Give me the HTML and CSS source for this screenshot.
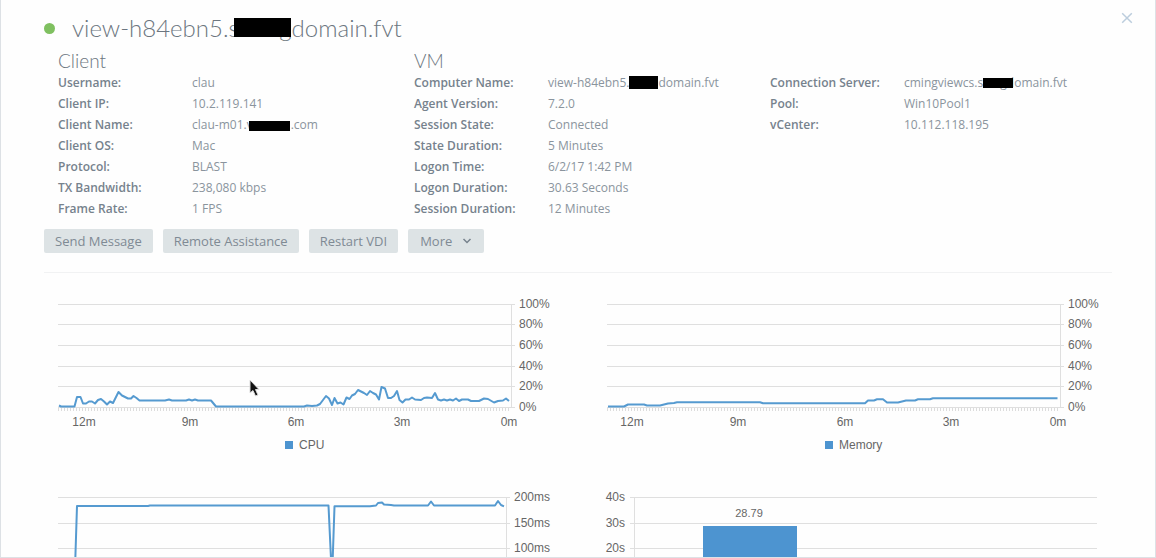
FILE: index.html
```html
<!DOCTYPE html>
<html lang="en">
<head>
<meta charset="utf-8">
<title>VDI session details</title>
<link rel="stylesheet" href="styles.css">
</head>
<body>
<main class="panel">
  <header class="header">
    <span class="status"></span>
    <h1 class="title">view-h84ebn5.<span class="redact redact-title"><span>s</span><span>g</span></span>domain.fvt</h1>
    <button class="close" type="button" aria-label="Close"><svg width="12" height="12" viewBox="0 0 12 12"><path d="M1.2 1.2 10.8 10.8M10.8 1.2 1.2 10.8"/></svg></button>
  </header>

  <div class="info">
    <section class="group">
      <h2>Client</h2>
      <dl>
        <dt>Username:</dt><dd>clau</dd>
        <dt>Client IP:</dt><dd>10.2.119.141</dd>
        <dt>Client Name:</dt><dd>clau-m01.<span class="redact redact-mail"><span>v</span></span>.com</dd>
        <dt>Client OS:</dt><dd>Mac</dd>
        <dt>Protocol:</dt><dd>BLAST</dd>
        <dt>TX Bandwidth:</dt><dd>238,080 kbps</dd>
        <dt>Frame Rate:</dt><dd>1 FPS</dd>
      </dl>
    </section>
    <section class="group">
      <h2>VM</h2>
      <dl>
        <dt>Computer Name:</dt><dd>view-h84ebn5.<span class="redact redact-host"></span>domain.fvt</dd>
        <dt>Agent Version:</dt><dd>7.2.0</dd>
        <dt>Session State:</dt><dd>Connected</dd>
        <dt>State Duration:</dt><dd>5 Minutes</dd>
        <dt>Logon Time:</dt><dd>6/2/17 1:42 PM</dd>
        <dt>Logon Duration:</dt><dd>30.63 Seconds</dd>
        <dt>Session Duration:</dt><dd>12 Minutes</dd>
      </dl>
    </section>
    <section class="group group-plain">
      <dl>
        <dt>Connection Server:</dt><dd>cmingviewcs.s<span class="redact redact-server"><span>gd</span></span>omain.fvt</dd>
        <dt>Pool:</dt><dd>Win10Pool1</dd>
        <dt>vCenter:</dt><dd>10.112.118.195</dd>
      </dl>
    </section>
  </div>

  <div class="actions">
    <button type="button">Send Message</button>
    <button type="button">Remote Assistance</button>
    <button type="button">Restart VDI</button>
    <button type="button" class="more">More <svg width="10" height="8" viewBox="0 0 10 8"><path d="M1.5 2 5 5.5 8.5 2"/></svg></button>
  </div>

  <div class="charts">
    <svg class="chart" viewBox="44 288 549 180" role="img" aria-label="CPU">
      <path class="grid" d="M58 304.5H515M58 324.5H515M58 345.5H515M58 366.5H515M58 386.5H515M58 407.5H515M511.5 304V408"/>
      <path class="ticks" d="M58 409.5H511"/>
      <polyline class="line" points="59,405.5 61,406.5 74.5,406.5 77,397 80.500,397 83,403.500 86,403.500 89,401.500 92,401.500 95,403.500 98,400 101,399 104,401.500 107,404.500 110,401.500 113,403 116,397 118.500,392 122,395.500 125,397 128,398.500 131,398.500 133.500,396 136.500,398 139.500,400.500 165,400.500 169,399.500 172,400.500 186,400.500 189,399.500 192,400.500 195,399.500 198,400.500 211,400.500 216,406.500 304,406.500 307,405.500 312,406 317,405.500 320,404 323,400 326,396 329,398.500 332,405 334.500,398 337.500,403.500 340.500,402.500 343.500,404.500 346.500,397.500 349.500,399 352,395.500 355,394 358,390 361,391.500 364,393 367,395 370,391 373,393 376,394.500 379,399.500 381.500,387 385,388.500 388,398 391,398 394,396 397,391 399.500,400 402.500,402.500 405.500,399.500 409,399.500 412,397.500 415,399.500 421,400 424,398 427,397.500 432,398 435,393 438,399.500 441,400.500 444,399.500 447,400.500 450,399.500 453,400.500 456,398.500 459,401 462,399.500 468,399.500 471,401 479,401 484,398.500 488,399 494,402.500 498,401 503,400.500 506,398.500 509,401"/>
      <g class="label">
        <text x="519" y="308">100%</text><text x="519" y="328">80%</text><text x="519" y="349">60%</text><text x="519" y="370">40%</text><text x="519" y="390">20%</text><text x="519" y="411">0%</text>
      </g>
      <g class="label center">
        <text x="84" y="426">12m</text><text x="190" y="426">9m</text><text x="296" y="426">6m</text><text x="402" y="426">3m</text><text x="509" y="426">0m</text>
      </g>
      <rect class="fill" x="285" y="441" width="8" height="8"/>
      <text class="label legend" x="299" y="449">CPU</text>
      <path class="cursor" d="M250 380V393L253 390.500 255.500 396 258 395 255.500 389.500H259Z"/>
    </svg>

    <svg class="chart" viewBox="593 288 549 180" role="img" aria-label="Memory">
      <path class="grid" d="M607 304.5H1064M607 324.5H1064M607 345.5H1064M607 366.5H1064M607 386.5H1064M607 407.5H1064M1060.5 304V408"/>
      <path class="ticks" d="M607 409.5H1060"/>
      <polyline class="line" points="608,406.5 624,406.5 628,404.500 644,404.500 647,405.500 660,405.500 668,403.500 674,403 677,402.300 760,402.300 763,403.300 865,403.300 868,400.500 874,400.500 877,399.300 883,399.300 887,402.500 898,402.500 906,400.500 915,400.500 918,399.300 930,399.300 933,398.300 1057.500,398.300"/>
      <g class="label">
        <text x="1068" y="308">100%</text><text x="1068" y="328">80%</text><text x="1068" y="349">60%</text><text x="1068" y="370">40%</text><text x="1068" y="390">20%</text><text x="1068" y="411">0%</text>
      </g>
      <g class="label center">
        <text x="632" y="426">12m</text><text x="738" y="426">9m</text><text x="845" y="426">6m</text><text x="951" y="426">3m</text><text x="1058" y="426">0m</text>
      </g>
      <rect class="fill" x="825" y="441" width="8" height="8"/>
      <text class="label legend" x="839" y="449">Memory</text>
    </svg>

    <svg class="chart" viewBox="44 480 549 150" role="img" aria-label="Latency">
      <path class="grid" d="M58 497.500H510M58 523.500H510M58 548.500H510M58 574.500H510M506.500 497V600"/>
      <polyline class="line" points="74,600 77,506 148,506 150,505.500 328.500,505.500 332,580 334.500,506.300 370,506.300 376,505.500 378,503 382,502.500 384,504.500 391,505 394,505.500 428,505.500 431,501.500 434,505.500 495,505.500 498,501 501,505 504,506.300"/>
      <g class="label">
        <text x="514" y="501">200ms</text><text x="514" y="527">150ms</text><text x="514" y="552">100ms</text>
      </g>
    </svg>

    <svg class="chart" viewBox="593 480 549 150" role="img" aria-label="Logon duration">
      <path class="grid" d="M630 497.500H1097M630 523.500H1097M630 548.500H1097M630 574.500H1097M634.500 497V600"/>
      <rect class="fill" x="703" y="526" width="94" height="74"/>
      <g class="label end">
        <text x="625" y="501">40s</text><text x="625" y="527">30s</text><text x="625" y="552">20s</text>
      </g>
      <text class="value" x="749" y="517">28.79</text>
    </svg>
  </div>
</main>
</body>
</html>
```
FILE: styles.css
```css
* { box-sizing: border-box; }

body {
  margin: 0;
  background: #fff;
  color: #7c8791;
  font-family: "Open Sans", "Noto Sans", sans-serif;
  font-size: 12px;
}

.panel {
  height: 100vh;
  overflow: hidden;
  border: 1px solid #dde1e5;
  border-top: 0;
  padding: 8px 13px 0 43px;
  background: #fefefe;
}

.header {
  display: flex;
  align-items: center;
  height: 40px;
}

.status {
  width: 11px;
  height: 11px;
  border-radius: 50%;
  background: #7fc060;
}

.title {
  flex: 1;
  margin: 0 0 0 17px;
  font: 300 24px/38px Lato, "Open Sans", sans-serif;
  color: #6c7680;
}

.close {
  align-self: flex-start;
  margin: 4px 9px 0 0;
  padding: 0;
  border: 0;
  background: none;
  line-height: 0;
}

.close path { fill: none; stroke: #bccddd; stroke-width: 1.5; }

.redact {
  position: relative;
  display: inline-flex;
  justify-content: space-between;
  line-height: 1;
}

.redact::after {
  content: "";
  position: absolute;
  background: #000;
}

.redact-title { width: 63px; }
.redact-title::after { inset: 2px 1px 3px 5px; }
.redact-mail { width: 44px; }
.redact-mail::after { inset: 2px 1px 0 2px; }
.redact-host { width: 29px; height: 9px; }
.redact-host::after { inset: -2px 0 -2px 0; }
.redact-server { width: 31px; justify-content: flex-end; }
.redact-server::after { inset: 1px 1px 1px 0; }

.info {
  display: grid;
  grid-template-columns: repeat(3, 1fr);
  margin-right: 30px;
}

.group { padding: 2px 0 0 14px; }

.group-plain { padding-top: 24px; }

.group h2 {
  margin: 0;
  font: 300 19px/22px Lato, "Open Sans", sans-serif;
  color: #6c7680;
}

.group dl {
  display: grid;
  grid-template-columns: 134px 1fr;
  margin: 0;
  line-height: 21px;
}

.group dt { font-weight: 600; color: #76828d; }
.group dd { margin: 0; padding-top: 1px; line-height: 20px; color: #8a949d; white-space: nowrap; }

.actions {
  display: flex;
  gap: 10px;
  margin: 10px 30px 0 0;
  padding-bottom: 19px;
  border-bottom: 1px solid #f1f2f3;
}

.actions button {
  height: 24px;
  padding: 0 11px;
  border: 0;
  border-radius: 2px;
  background: #dde3e5;
  color: #7f8a94;
  font: 400 13px/24px "Open Sans", "Noto Sans", sans-serif;
}

.actions .more {
  display: flex;
  align-items: center;
  gap: 10px;
  padding: 0 12px;
}

.more path { fill: none; stroke: #77838d; stroke-width: 1.5; }

.charts {
  display: grid;
  grid-template-columns: 1fr 1fr;
  row-gap: 12px;
  margin-top: 15px;
}

.chart { display: block; width: 100%; height: auto; }

.grid { fill: none; stroke: #dfdfdf; stroke-width: 1; }
.ticks { fill: none; stroke: #dcdcdc; stroke-width: 3; stroke-dasharray: 1 2; }
.line { fill: none; stroke: #559ad0; stroke-width: 2; stroke-linejoin: round; }
.fill { fill: #4d94d0; }

.label { fill: #666; font: 12px "Liberation Sans", Arial, sans-serif; }
.value { fill: #666; font: 11px "Liberation Sans", Arial, sans-serif; text-anchor: middle; }
.center { text-anchor: middle; }
.end { text-anchor: end; }
.cursor { fill: #111; stroke: #ddd; stroke-width: 1; }
```
